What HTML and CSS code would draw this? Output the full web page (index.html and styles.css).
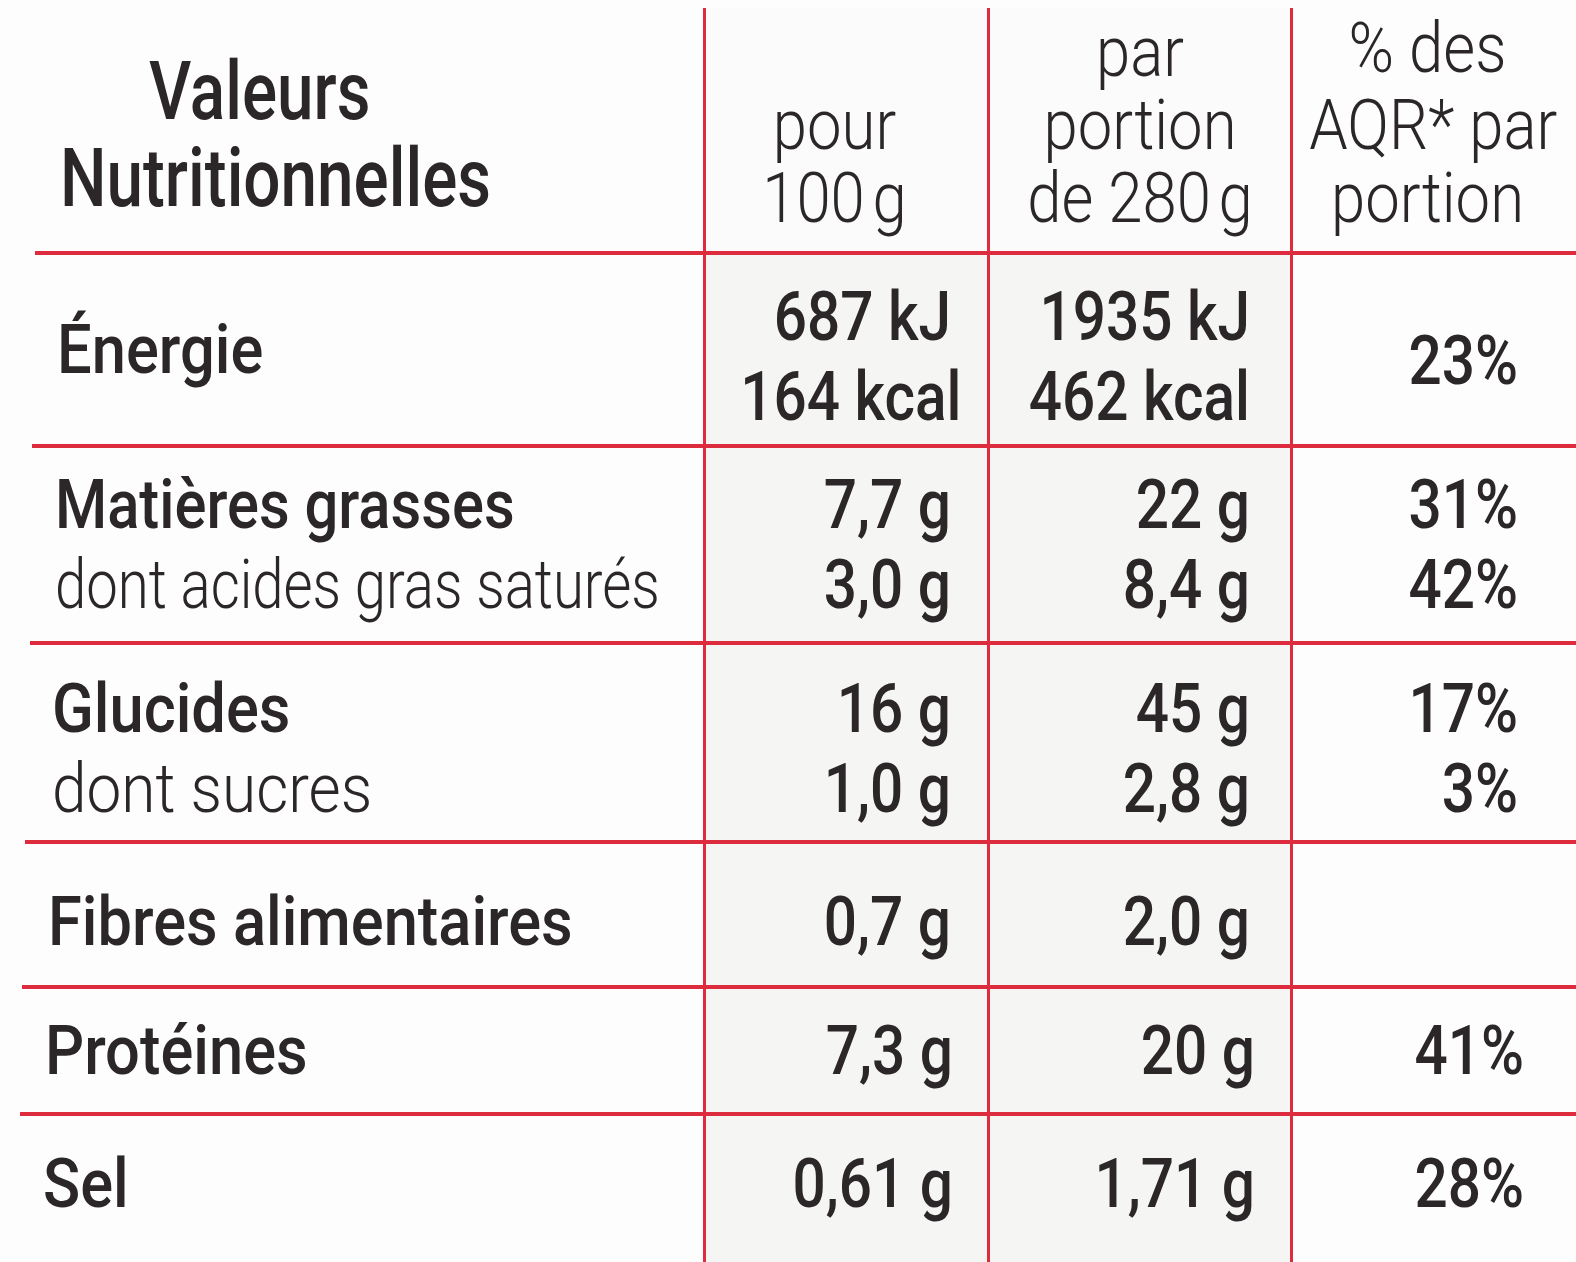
FILE: index.html
```html
<!DOCTYPE html>
<html lang="fr">
<head>
<meta charset="utf-8">
<title>Valeurs Nutritionnelles</title>
<link rel="stylesheet" href="styles.css">
</head>
<body>
<main class="label">
  <div class="cell head-name">
    <span class="ln valeurs">Valeurs</span>
    <span class="ln">Nutritionnelles</span>
  </div>
  <div class="cell val head c2"><span class="ln">pour</span><span class="ln">100&#8201;g</span></div>
  <div class="cell val head c3"><span class="ln">par</span><span class="ln">portion</span><span class="ln">de 280&#8201;g</span></div>
  <div class="cell val head c4"><span class="ln pct-head">% des</span><span class="ln">AQR* par</span><span class="ln">portion</span></div>

  <div class="cell name r-energy"><span class="ln">Énergie</span></div>
  <div class="cell val num c2 r-energy"><span class="ln">687 kJ</span><span class="ln">164 kcal</span></div>
  <div class="cell val num c3 r-energy"><span class="ln">1935 kJ</span><span class="ln">462 kcal</span></div>
  <div class="cell val num c4 r-energy"><span class="ln">23%</span></div>

  <div class="cell name r-fat"><span class="ln fat-main">Matières grasses</span><span class="ln sub">dont acides gras saturés</span></div>
  <div class="cell val num c2 r-fat"><span class="ln">7,7 g</span><span class="ln">3,0 g</span></div>
  <div class="cell val num c3 r-fat"><span class="ln">22 g</span><span class="ln">8,4 g</span></div>
  <div class="cell val num c4 r-fat"><span class="ln">31%</span><span class="ln">42%</span></div>

  <div class="cell name r-carb"><span class="ln">Glucides</span><span class="ln sub sub-wide">dont sucres</span></div>
  <div class="cell val num c2 r-carb"><span class="ln">16 g</span><span class="ln">1,0 g</span></div>
  <div class="cell val num c3 r-carb"><span class="ln">45 g</span><span class="ln">2,8 g</span></div>
  <div class="cell val num c4 r-carb"><span class="ln">17%</span><span class="ln">3%</span></div>

  <div class="cell name r-fiber"><span class="ln">Fibres alimentaires</span></div>
  <div class="cell val num c2 r-fiber"><span class="ln">0,7 g</span></div>
  <div class="cell val num c3 r-fiber"><span class="ln">2,0 g</span></div>
  <div class="cell val num c4 r-fiber"></div>

  <div class="cell name r-prot"><span class="ln">Protéines</span></div>
  <div class="cell val num c2 r-prot"><span class="ln">7,3 g</span></div>
  <div class="cell val num c3 r-prot"><span class="ln">20 g</span></div>
  <div class="cell val num c4 r-prot"><span class="ln">41%</span></div>

  <div class="cell name r-last"><span class="ln">Sel</span></div>
  <div class="cell val num c2 r-last"><span class="ln">0,61 g</span></div>
  <div class="cell val num c3 r-last"><span class="ln">1,71 g</span></div>
  <div class="cell val num c4 r-last"><span class="ln">28%</span></div>
</main>
</body>
</html>
```

FILE: styles.css
```css
html, body {
  margin: 0;
  padding: 0;
  background: #fdfdfd;
}

body {
  font-family: Roboto, "Liberation Sans", sans-serif;
  color: #2b2729;
  overflow: hidden;
}

.label {
  display: grid;
  grid-template-columns: 703px 284px 303px 1fr;
  grid-template-rows: 255px 193px 197px 199px 145px 127px 1fr;
  width: 1576px;
  height: 1262px;
}

.cell {
  box-sizing: border-box;
  border-bottom: 4px solid #dc2c3d;
  display: flex;
  flex-direction: column;
  justify-content: center;
  min-width: 0;
}

.val {
  border-left: 3px solid #dc2c3d;
}

.c2, .c3 {
  background: #f5f5f4;
}

.head.c2, .head.c3 {
  background: #fbfbfb;
}

.ln {
  display: block;
  white-space: nowrap;
}

/* header */
.head-name {
  justify-content: flex-start;
  margin-left: 35px;
  padding-left: 25px;
  padding-top: 48px;
  font-size: 82px;
  line-height: 87px;
  font-weight: 500;
}

.head-name .ln {
  transform: scaleX(0.8);
  transform-origin: left center;
}

.head-name .valeurs {
  margin-left: 89px;
}

.head {
  margin-top: 8px;
  justify-content: flex-end;
  padding-bottom: 16px;
  text-align: center;
  font-size: 70px;
  line-height: 73px;
  font-weight: 300;
}

.head .ln {
  transform: scaleX(0.88);
  transform-origin: center;
}

.head.c2 {
  padding-right: 24px;
}

.head.c4 {
  padding-right: 14px;
}

.head .pct-head {
  margin-bottom: 4px;
}

/* row labels */
.name {
  margin-left: 28px;
  padding-left: 27px;
}

.name .ln {
  font-size: 69px;
  line-height: 80px;
  font-weight: 500;
  transform: scaleX(0.89);
  transform-origin: left center;
}

.name .fat-main {
  transform: scaleX(0.865);
}

.name .sub {
  font-weight: 300;
  transform: scaleX(0.815);
}

.name .sub-wide {
  transform: scaleX(0.9);
}

.name.r-energy { margin-left: 32px; padding-left: 25px; padding-top: 0; }
.name.r-fat    { margin-left: 30px; padding-left: 25px; }
.name.r-carb   { margin-left: 25px; padding-left: 27px; }
.name.r-fiber  { margin-left: 22px; padding-left: 26px; }
.name.r-prot   { margin-left: 20px; padding-left: 25px; }
.name.r-last   { margin-left: 20px; padding-left: 23px; }

/* numbers */
.num {
  text-align: right;
  font-size: 68px;
  line-height: 80px;
  font-weight: 500;
}

.num .ln {
  transform: scaleX(0.86);
  transform-origin: right center;
}

.num.c2 { padding-right: 36px; }
.num.c3 { padding-right: 40px; }
.num.c4 { padding-right: 58px; }

.num.c2.r-prot, .num.c2.r-last { padding-right: 34px; }
.num.c3.r-prot, .num.c3.r-last { padding-right: 35px; }
.num.c4.r-prot, .num.c4.r-last { padding-right: 52px; }

.num.r-energy { padding-top: 14px; }
.num.c4.r-energy { padding-top: 22px; }
.r-carb { padding-top: 12px; }
.r-fiber { padding-top: 14px; }

.r-last {
  border-bottom: none;
  padding-bottom: 10px;
}
```
